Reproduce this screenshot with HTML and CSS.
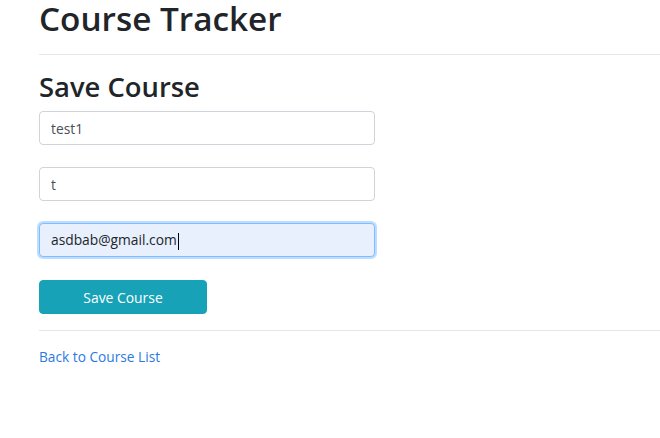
FILE: index.html
```html
<!DOCTYPE html>
<html>
<head>
<meta charset="utf-8">
<link rel="stylesheet" href="styles.css">
</head>
<body>
<div class="container">
  <h1 class="title">Course Tracker</h1>
  <hr class="rule">
  <h2 class="subtitle">Save Course</h2>
  <form class="form">
    <div class="field"><input class="control" type="text" value="test1"></div>
    <div class="field"><input class="control" type="text" value="t"></div>
    <div class="field field-last"><div class="control focused">asdbab@gmail.com<span class="caret"></span></div></div>
    <button class="btn" type="button">Save Course</button>
  </form>
  <hr class="rule rule-bottom">
  <a class="back" href="#">Back to Course List</a>
</div>
</body>
</html>
```
FILE: styles.css
```css
* { box-sizing: border-box; }
html, body { margin: 0; padding: 0; background: #fff; }
body {
  font-family: "Open Sans", "Noto Sans", sans-serif;
  color: #212529;
  font-size: 14.4px;
}
.container { padding-left: 39px; }
.title {
  margin: 0;
  font-size: 33.3px;
  font-weight: 600;
  line-height: 36px;
}
.rule {
  border: 0;
  border-top: 1px solid #e6e6e6;
  margin: 18px 0 0 0;
  height: 0;
}
.subtitle {
  margin: 15px 0 0 0;
  font-size: 27.4px;
  font-weight: 600;
  line-height: 34px;
}
.form { margin-top: 7px; }
.field { margin-bottom: 22px; }
.field-last { margin-bottom: 23px; }
.control {
  display: block;
  width: 336px;
  height: 34px;
  padding: 0 11px;
  border: 1px solid #ced4da;
  border-radius: 4px;
  font-family: inherit;
  font-size: 13.8px;
  color: #495057;
  background: #fff;
  line-height: 32px;
  outline: none;
}
.focused {
  background: #e8f0fe;
  border-color: #80bdff;
  box-shadow: 0 0 0 2px rgba(0, 123, 255, 0.25);
  color: #212529;
}
.caret {
  display: inline-block;
  width: 1px;
  height: 17px;
  background: #000;
  vertical-align: middle;
  margin-left: 1px;
}
.btn {
  display: block;
  width: 168px;
  height: 34px;
  border: 1px solid #17a2b8;
  background: #17a2b8;
  color: #fff;
  border-radius: 4px;
  font-family: inherit;
  font-size: 13.9px;
  padding: 0;
}
.rule-bottom { margin-top: 16px; }
.back {
  display: inline-block;
  margin-top: 16px;
  color: #2a7ae2;
  text-decoration: none;
  font-size: 13.7px;
}
```
